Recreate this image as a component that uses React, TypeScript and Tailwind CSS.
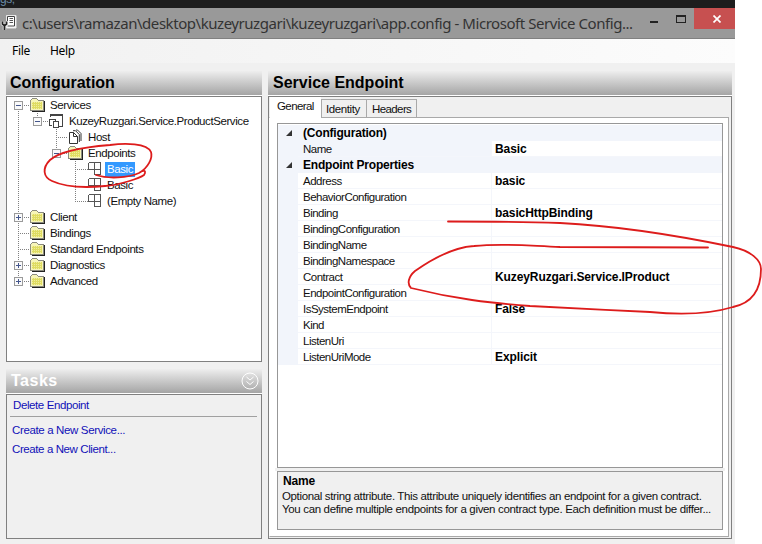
import type { ReactNode } from "react";

type Expand = "minus" | "plus" | null;
type Icon = "folder" | "service" | "host" | "endpoint";
type Node = { label: string; icon: Icon; level: number; expand: Expand; selected?: boolean };

const nodes: Node[] = [
  { label: "Services", icon: "folder", level: 0, expand: "minus" },
  { label: "KuzeyRuzgari.Service.ProductService", icon: "service", level: 1, expand: "minus" },
  { label: "Host", icon: "host", level: 2, expand: null },
  { label: "Endpoints", icon: "folder", level: 2, expand: "minus" },
  { label: "Basic", icon: "endpoint", level: 3, expand: null, selected: true },
  { label: "Basic", icon: "endpoint", level: 3, expand: null },
  { label: "(Empty Name)", icon: "endpoint", level: 3, expand: null },
  { label: "Client", icon: "folder", level: 0, expand: "plus" },
  { label: "Bindings", icon: "folder", level: 0, expand: null },
  { label: "Standard Endpoints", icon: "folder", level: 0, expand: null },
  { label: "Diagnostics", icon: "folder", level: 0, expand: "plus" },
  { label: "Advanced", icon: "folder", level: 0, expand: "plus" },
];

const indents = ["pl-[7px]", "pl-[26px]", "pl-[45px]", "pl-[65px]"];

type Prop = { name: string; value?: string; category?: boolean; active?: boolean };
const props: Prop[] = [
  { name: "(Configuration)", category: true },
  { name: "Name", value: "Basic", active: true },
  { name: "Endpoint Properties", category: true },
  { name: "Address", value: "basic" },
  { name: "BehaviorConfiguration" },
  { name: "Binding", value: "basicHttpBinding" },
  { name: "BindingConfiguration" },
  { name: "BindingName" },
  { name: "BindingNamespace" },
  { name: "Contract", value: "KuzeyRuzgari.Service.IProduct" },
  { name: "EndpointConfiguration" },
  { name: "IsSystemEndpoint", value: "False" },
  { name: "Kind" },
  { name: "ListenUri" },
  { name: "ListenUriMode", value: "Explicit" },
];

function TreeIcon({ icon }: { icon: Icon }) {
  return (
    <svg width="16" height="16" viewBox="0 0 16 16" className="shrink-0" shapeRendering="crispEdges">
      {icon === "folder" && (
        <>
          <path d="M2 14H14V4" fill="none" stroke="#222" strokeWidth="1.5" />
          <path d="M0.5 13.5V3.5L2.5 1.5H6.5L8.5 3.5H13.5V13.5Z" fill="#f7f5b8" stroke="#8c8c80" />
          <path d="M2 5H12V12H2Z" fill="#dfdc62" />
          <path d="M2 5.5H12M2 7.5H12M2 9.5H12M2 11.5H12" stroke="#f0ee9c" strokeDasharray="1 1" />
        </>
      )}
      {icon === "service" && (
        <g fill="none" stroke="#444">
          <path d="M1.5 4V1.5H13.5V13.5H10" />
          <path d="M1 2H14" strokeWidth="2" />
          <path d="M3 12.5H0.5V6.5H6.5V8" />
          <path d="M4.5 8.5H9.5V14.5H4.5Z" fill="#fff" />
        </g>
      )}
      {icon === "host" && (
        <g fill="none" stroke="#333" shapeRendering="auto">
          <path d="M1.5 3.5H5.5L9.5 7.5V14.5H1.5Z" fill="#fff" />
          <path d="M5.500 3.500V7.500H9.500" />
          <path d="M5 1.700H7.500L11.300 5.500V13M8 1H9.500L13 4.500V12" />
        </g>
      )}
      {icon === "endpoint" && (
        <path d="M0.5 1.5H12.5V13.5H6.5V1.5M0.5 1.5V8.5H12.5" fill="none" stroke="#555" />
      )}
    </svg>
  );
}

function Toggle({ kind }: { kind: Expand }) {
  return (
    <svg width="9" height="9" className="mr-[7px] shrink-0" shapeRendering="crispEdges">
      {kind && (
        <>
          <rect x="0.5" y="0.5" width="8" height="8" fill="#fafafa" stroke="#9a9a9a" />
          <path d={kind === "plus" ? "M2 4.5H7M4.5 2V7" : "M2 4.5H7"} stroke="#44568c" />
        </>
      )}
    </svg>
  );
}

function Header({ children, light }: { children: ReactNode; light?: boolean }) {
  return (
    <div
      className={
        "flex h-[25px] shrink-0 items-center justify-between border-b border-white bg-linear-to-b from-[#eeeeee] to-[#a5a5a5] text-[16px] font-bold leading-none tracking-normal " +
        (light ? "text-white" : "text-black")
      }
    >
      {children}
    </div>
  );
}

export default function App() {
  return (
    <div className="relative h-[544px] w-[762px] overflow-hidden bg-white font-['Liberation_Sans',Arial,sans-serif] text-[11.5px] tracking-[-0.4px] text-[#111]">
      <div className="flex h-full w-[735px] flex-col bg-[#f0f0f0]">
        <div className="h-2 shrink-0 overflow-hidden bg-[#1d1d1d]">
          <div className="-mt-2 text-[12px] leading-[14px] text-[#6b8ba5]">gs;</div>
        </div>
        <header className="flex h-[31px] shrink-0 border-b border-[#808080] bg-[#999999]">
          <svg width="17" height="24" viewBox="0 0 17 24" className="mt-1 shrink-0">
            <path d="M6.5 3.5H16V16H6.5Z" fill="#fff" stroke="#e8e8e8" />
            <path d="M7.5 9V4.5H14.500V14H7.500" fill="none" stroke="#444" />
            <path d="M9.500 6.500H13M9.500 8.500H13M9.500 10.500H13" stroke="#555" />
            <path d="M2.500 9.500V12L4.500 13.500L6.500 12V9.500M4.500 13.500V18" fill="none" stroke="#eee" strokeWidth="3.400" />
            <path d="M2.500 9.500V12L4.500 13.500L6.500 12V9.500M4.500 13.500V18" fill="none" stroke="#222" strokeWidth="1.800" />
          </svg>
          <h1 className="ml-[5px] w-[622px] whitespace-nowrap font-['Noto_Sans',sans-serif] text-[15px] leading-[30px] tracking-[-0.45px] text-[#333]">
            c:\users\ramazan\desktop\kuzeyruzgari\kuzeyruzgari\app.config - Microsoft Service Config...
          </h1>
          <svg width="50" height="30" className="shrink-0" shapeRendering="crispEdges">
            <path d="M6 14H14" stroke="#222" strokeWidth="2" />
            <path d="M32.5 8V14.5H41.5V8" fill="none" stroke="#222" />
            <path d="M32 8H42" stroke="#222" strokeWidth="2" />
          </svg>
          <div className="flex h-[21px] flex-1 items-center justify-center bg-[#c75050] pl-[5px]">
            <svg width="8" height="8">
              <path d="M0.5 0.5L7.5 7.5M7.5 0.5L0.5 7.5" stroke="#fff" strokeWidth="1.7" />
            </svg>
          </div>
        </header>
        <nav className="flex h-6 shrink-0 items-center gap-5 bg-linear-to-r from-[#f1f1f1] to-[#fcfcfc] pl-3 font-['Noto_Sans',sans-serif] text-[12px] leading-6 tracking-[-0.3px] text-black">
          <span>File</span>
          <span>Help</span>
        </nav>

        <main className="flex min-h-0 flex-1 gap-1.5 pt-2 pr-[3px] pb-[5px] pl-1.5">
          <section className="flex w-64 shrink-0 flex-col">
            <Header>
              <span className="pl-1">Configuration</span>
            </Header>
            <div className="relative h-[266px] shrink-0 border border-[#808080] bg-white">
              <svg width="100" height="200" className="absolute top-0 left-0" shapeRendering="crispEdges">
                <g fill="none" stroke="#808080" strokeDasharray="1 1">
                  <path d="M11.5 12V184M11 8.5H23M11 120.5H23M11 136.5H23M11 152.5H23M11 168.5H23M11 184.5H23" />
                  <path d="M30.5 16V24M30 24.5H42M49.5 32V56M49 40.5H61M49 56.5H61M68.5 64V104M68 72.5H81M68 104.5H81" />
                </g>
              </svg>
              <div className="relative flex flex-col tracking-[-0.42px]">
                {nodes.map((n, i) => (
                  <div key={i} className={"flex h-4 items-center " + indents[n.level]}>
                    <Toggle kind={n.expand} />
                    <TreeIcon icon={n.icon} />
                    <span
                      className={
                        "whitespace-nowrap leading-[15px] " +
                        (n.level === 3 ? "ml-px px-0.5 " : "ml-1 ") +
                        (n.selected ? "bg-[#3399ff] text-white" : "")
                      }
                    >
                      {n.label}
                    </span>
                  </div>
                ))}
              </div>
            </div>
            <div className="mt-[7px]">
              <Header light>
                <span className="pl-[5px] tracking-[0.5px]">Tasks</span>
                <svg width="18" height="18" viewBox="0 0 18 18" className="mr-[3px]" fill="none" stroke="#fff">
                  <circle cx="9" cy="9" r="8" />
                  <path d="M5.5 5L9 8L12.5 5M5.5 9.5L9 12.5L12.5 9.5" />
                </svg>
              </Header>
            </div>
            <div className="flex min-h-0 flex-1 flex-col border border-[#808080] pl-[5px] text-[#1010b8]">
              <a className="mt-[2px] pl-px leading-4">Delete Endpoint</a>
              <hr className="mt-[3px] mr-1 -ml-0.5 border-[#a0a0a0]" />
              <a className="mt-[5px] leading-4 tracking-[-0.36px]">Create a New Service...</a>
              <a className="mt-[3px] leading-4 tracking-[-0.4px]">Create a New Client...</a>
            </div>
          </section>

          <section className="flex min-w-0 flex-1 flex-col">
            <Header>
              <span className="pl-[5px]">Service Endpoint</span>
            </Header>
            <div className="flex min-h-0 flex-1 flex-col border border-[#808080] pr-0.5 pb-px">
              <div className="flex h-5 shrink-0 items-end pl-px">
                <span className="relative -mb-px h-[21px] w-[51px] bg-white pl-[7px] leading-[19px] tracking-[-0.6px]">General</span>
                <span className="h-[18px] w-[46px] border border-b-0 border-[#a9a9a9] pl-1 leading-[19px]">Identity</span>
                <span className="-ml-px h-[18px] w-[51px] border border-b-0 border-[#a9a9a9] pl-[5px] leading-[19px] tracking-[-0.6px]">Headers</span>
              </div>
              <div className="flex min-h-0 flex-1 flex-col border border-[#a9a9a9] border-l-white bg-white pt-[5px] pr-[5px] pb-[6px] pl-[7px]">
                <div className="h-[345px] shrink-0 border border-[#979797] pt-px">
                  {props.map((p) => (
                    <div key={p.name} className="flex h-4 bg-[#f2f5fb]">
                      <div className="flex w-5 shrink-0 items-center justify-end pr-[6px]">
                        {p.category && (
                          <svg width="6" height="6">
                            <path d="M6 0V6H0Z" fill="#333" />
                          </svg>
                        )}
                      </div>
                      {p.category ? (
                        <b className="pl-[5px] text-[12px] leading-4 tracking-[-0.2px] text-black">{p.name}</b>
                      ) : (
                        <>
                          <span
                            className={
                              "w-[194px] border-r border-b border-[#f4f6fb] pl-[5px] leading-4 tracking-[-0.5px] " +
                              (p.active ? "bg-[#f2f5fb]" : "bg-white")
                            }
                          >
                            {p.name}
                          </span>
                          <b className="flex-1 border-b border-[#f4f6fb] bg-white pl-[3px] text-[12px] leading-4 tracking-[-0.1px] text-black">
                            {p.value}
                          </b>
                        </>
                      )}
                    </div>
                  ))}
                </div>
                <div className="-mx-0.5 h-[3px] shrink-0 bg-[#f0f0f0]" />
                <div className="min-h-0 flex-1 border border-[#979797] bg-[#f0f0f0] pt-px pl-1">
                  <b className="block pl-px text-[12px] leading-4 tracking-[-0.2px] text-black">Name</b>
                  <p className="mt-px whitespace-nowrap leading-[13px] tracking-[-0.36px]">
                    Optional string attribute. This attribute uniquely identifies an endpoint for a given contract.
                    <br />
                    <span className="tracking-[-0.34px]">
                      You can define multiple endpoints for a given contract type. Each definition must be differ...
                    </span>
                  </p>
                </div>
              </div>
            </div>
          </section>
        </main>
      </div>

      <svg width="762" height="544" className="pointer-events-none absolute inset-0" fill="none" stroke="#dd1c1c" strokeWidth="1.8" strokeLinecap="round">
        <path d="M96 175C108 179 128 178 139 173C148 168 153 158 151 152C147 143 125 143 110 145C85 147 60 151 50 160C42 168 43 177 52 181C65 187 85 188 105 186C120 185 140 178 144 175C146 172 145 170 143 171" />
        <path d="M448 221.5C490 221.5 530 222 560 223C620 226 680 236 733 247C751 251 761 260 761 269C761 290 752 303 733 307C710 314 680 315 650 312C610 310 550 307 530 306C490 303 455 299 411 288C407 284 408 277 415 271C435 257 455 247 474 246C505 243 530 246 560 247L708 247.5" />
      </svg>
    </div>
  );
}
